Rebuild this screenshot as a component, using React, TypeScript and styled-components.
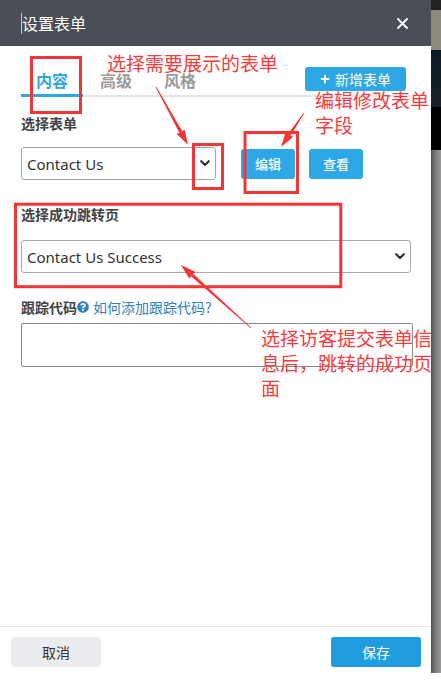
import React from "react";
import styled, { createGlobalStyle } from "styled-components";
import { FaPlus, FaQuestionCircle } from "react-icons/fa";

const Global = createGlobalStyle`
  html, body { margin: 0; padding: 0; background: #ffffff; }
  body { font-family: "Noto Sans", "Noto Sans CJK SC", sans-serif; }
  * { box-sizing: border-box; }
`;

const Page = styled.div`
  display: flex;
  width: 441px;
  height: 673px;
`;

const Dialog = styled.div`
  position: relative;
  width: 431px;
  height: 673px;
  overflow: hidden;
  background: #ffffff;
  display: flex;
  flex-direction: column;
`;

const Backdrop = styled.div`
  width: 10px;
  height: 673px;
  background:
    linear-gradient(
      to bottom,
      #202224 0px, #202224 10px,
      #8b887e 10px, #8b887e 50px,
      #0f1b24 50px, #1a2228 107px,
      #000000 107px, #000000 150px,
      transparent 150px
    ),
    linear-gradient(to right, #505050, #7a7a7a 40%, #9a9a9a);
`;

const Header = styled.div`
  height: 46px;
  background: #4a4e56;
  display: flex;
  align-items: center;
  justify-content: space-between;
  padding: 0 23px 0 21px;
  flex-shrink: 0;
`;

const Title = styled.div`
  color: #ffffff;
  font-family: "Noto Sans CJK SC", sans-serif;
  font-size: 16px;
  line-height: 21px;
  border-left: 1px solid #b9c6dc;
  padding-left: 0;
`;

const CloseIcon = styled.svg`
  width: 11px;
  height: 11px;
  display: block;
`;

const Body = styled.div`
  flex: 1;
  padding: 0 18px 0 21px;
  display: flex;
  flex-direction: column;
`;

const TabBar = styled.div`
  margin-top: 14px;
  display: flex;
  align-items: flex-end;
  border-bottom: 2px solid #e6e6e6;
  width: 389px;
`;

const Tab = styled.div<{ $active?: boolean }>`
  width: 62px;
  margin-right: 2px;
  margin-bottom: -2px;
  padding-top: 6px;
  height: 37px;
  line-height: 28px;
  text-align: center;
  font-family: "Noto Sans CJK SC", sans-serif;
  font-size: 16px;
  font-weight: 700;
  color: ${(p) => (p.$active ? "#2ea6e4" : "#9a9a9a")};
  border-bottom: 3px solid ${(p) => (p.$active ? "#2ea6e4" : "transparent")};
`;

const AddButton = styled.div`
  align-self: flex-start;
  margin-top: 7px;
  margin-left: auto;
  margin-right: 4px;
  width: 101px;
  height: 24px;
  border-radius: 3px;
  background: #2da7e6;
  color: #ffffff;
  display: flex;
  align-items: center;
  justify-content: center;
  gap: 5px;
  font-family: "Noto Sans CJK SC", sans-serif;
  font-size: 14px;
`;

const Label = styled.div<{ $mt: number }>`
  margin-top: ${(p) => p.$mt}px;
  font-family: "Noto Sans CJK SC", sans-serif;
  font-size: 14px;
  line-height: 20px;
  font-weight: 700;
  color: #444444;
  display: flex;
  align-items: center;
`;

const Row = styled.div`
  margin-top: 14px;
  display: flex;
  align-items: center;
`;

const SelectBox = styled.div<{ $w: number; $mt?: number }>`
  margin-top: ${(p) => p.$mt ?? 0}px;
  width: ${(p) => p.$w}px;
  height: 33px;
  border: 1px solid #a9a9a9;
  border-radius: 3px;
  display: flex;
  align-items: center;
  justify-content: space-between;
  padding: 0 5px 0 5px;
  font-family: "Noto Sans", sans-serif;
  font-size: 15px;
  color: #333333;
  background: #ffffff;
`;

const Chevron = styled.svg`
  width: 10px;
  height: 7px;
  display: block;
`;

const BlueButton = styled.div<{ $ml: number }>`
  margin-left: ${(p) => p.$ml}px;
  width: 54px;
  height: 30px;
  border-radius: 3px;
  background: #2da7e6;
  color: #ffffff;
  display: flex;
  align-items: center;
  justify-content: center;
  font-family: "Noto Sans CJK SC", sans-serif;
  font-size: 13px;
  font-weight: 500;
`;

const HelpLink = styled.span`
  margin-left: 4px;
  font-weight: 400;
  color: #2f7fc1;
`;

const HelpIcon = styled.span`
  display: inline-flex;
  margin-left: 0px;
  color: #2f7fc1;
`;

const TextArea = styled.div`
  margin-top: 6px;
  width: 392px;
  height: 44px;
  border: 1px solid #8a8a8a;
  border-radius: 2px;
  background: #ffffff;
`;

const Footer = styled.div`
  flex-shrink: 0;
  border-top: 1px solid #e6e6e6;
  padding: 10px 10px 6px 11px;
  display: flex;
  justify-content: space-between;
`;

const FooterButton = styled.div<{ $primary?: boolean }>`
  width: 90px;
  height: 30px;
  border-radius: 3px;
  background: ${(p) => (p.$primary ? "#1f9de0" : "#ebecf0")};
  color: ${(p) => (p.$primary ? "#ffffff" : "#333333")};
  display: flex;
  align-items: center;
  justify-content: center;
  font-family: "Noto Sans CJK SC", sans-serif;
  font-size: 14px;
`;

/* ---- annotation layer (drawn over the dialog) ---- */

const Overlay = styled.svg`
  position: absolute;
  left: 0;
  top: 0;
  width: 431px;
  height: 673px;
  pointer-events: none;
`;

const Note = styled.div<{ $x: number; $y: number }>`
  position: absolute;
  left: ${(p) => p.$x}px;
  top: ${(p) => p.$y}px;
  white-space: nowrap;
  font-family: "Noto Sans CJK SC", sans-serif;
  font-size: 19px;
  line-height: 25px;
  color: #f63c3c;
  pointer-events: none;
`;

const RED = "#f43535";

function Arrow({ x1, y1, x2, y2 }: { x1: number; y1: number; x2: number; y2: number }) {
  const dx = x2 - x1;
  const dy = y2 - y1;
  const len = Math.hypot(dx, dy);
  const ux = dx / len;
  const uy = dy / len;
  const L = 15;
  const W = 4.5;
  const bx = x2 - ux * L;
  const by = y2 - uy * L;
  const nx = -uy;
  const ny = ux;
  const pts = `${x2},${y2} ${bx + nx * W},${by + ny * W} ${bx - nx * W},${by - ny * W}`;
  return (
    <g>
      <polygon points={`${x1 - nx * 0.4},${y1 - ny * 0.4} ${x1 + nx * 0.4},${y1 + ny * 0.4} ${bx + nx * 1.6},${by + ny * 1.6} ${bx - nx * 1.6},${by - ny * 1.6}`} fill={RED} />
      <polygon points={pts} fill={RED} />
    </g>
  );
}

function ChevronDown() {
  return (
    <Chevron viewBox="0 0 10 7">
      <polyline points="1.2,1.2 5,5 8.8,1.2" fill="none" stroke="#333" strokeWidth="2.2" strokeLinecap="round" strokeLinejoin="round" />
    </Chevron>
  );
}

export default function App() {
  return (
    <>
      <Global />
      <Page>
        <Dialog>
          <Header>
            <Title>设置表单</Title>
            <CloseIcon viewBox="0 0 11 11">
              <path d="M1 1 L10 10 M10 1 L1 10" stroke="#ffffff" strokeWidth="1.8" strokeLinecap="round" />
            </CloseIcon>
          </Header>
          <Body>
            <TabBar>
              <Tab $active>内容</Tab>
              <Tab>高级</Tab>
              <Tab>风格</Tab>
              <AddButton>
                <FaPlus size={10} />
                新增表单
              </AddButton>
            </TabBar>

            <Label $mt={16}>选择表单</Label>
            <Row>
              <SelectBox $w={195}>
                <span>Contact Us</span>
                <ChevronDown />
              </SelectBox>
              <BlueButton $ml={25}>编辑</BlueButton>
              <BlueButton $ml={14}>查看</BlueButton>
            </Row>

            <Label $mt={24}>选择成功跳转页</Label>
            <SelectBox $w={390} $mt={16}>
              <span>Contact Us Success</span>
              <ChevronDown />
            </SelectBox>

            <Label $mt={24}>
              跟踪代码
              <HelpIcon>
                <FaQuestionCircle size={12} />
              </HelpIcon>
              <HelpLink>如何添加跟踪代码?</HelpLink>
            </Label>
            <TextArea />
          </Body>
          <Footer>
            <FooterButton>取消</FooterButton>
            <FooterButton $primary>保存</FooterButton>
          </Footer>

          <Overlay viewBox="0 0 431 673">
            <g fill="none" stroke={RED} strokeWidth="3">
              <rect x="31.5" y="57.5" width="49" height="55" />
              <rect x="193.5" y="144.5" width="29" height="44" />
              <rect x="245" y="132.5" width="52.5" height="60" />
              <rect x="15.5" y="204.2" width="325.3" height="82.5" />
            </g>
            <Arrow x1={156} y1={87} x2={188} y2={145} />
            <Arrow x1={304} y1={113} x2={281} y2={147} />
            <Arrow x1={251} y1={328} x2={181} y2={265} />
          </Overlay>
          <Note $x={107} $y={50}>选择需要展示的表单</Note>
          <Note $x={315} $y={87}>
            编辑修改表单
            <br />
            字段
          </Note>
          <Note $x={261} $y={325}>
            选择访客提交表单信
            <br />
            息后，跳转的成功页
            <br />
            面
          </Note>
        </Dialog>
        <Backdrop />
      </Page>
    </>
  );
}
